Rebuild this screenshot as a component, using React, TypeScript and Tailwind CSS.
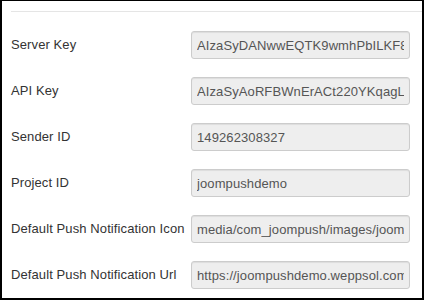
import React from "react";

const rows: [string, string][] = [
  ["Server Key", "AIzaSyDANwwEQTK9wmhPbILKF8xQ"],
  ["API Key", "AIzaSyAoRFBWnErACt220YKqagLmn"],
  ["Sender ID", "149262308327"],
  ["Project ID", "joompushdemo"],
  ["Default Push Notification Icon", "media/com_joompush/images/joompush.png"],
  ["Default Push Notification Url", "https://joompushdemo.weppsol.com"],
];

export default function App() {
  return (
    <div
      className="w-[424px] h-[300px] bg-white border-l-2 border-t border-r-2 border-b-2 border-black overflow-hidden"
      style={{ fontFamily: '"Liberation Sans", Arial, sans-serif' }}
    >
      <div className="pl-[9px] pt-[10px]">
        <div className="h-px bg-[#e5e5e5]" />
        <div className="mt-[19px] flex flex-col gap-[18px]">
          {rows.map(([label, value]) => (
            <div key={label} className="flex items-center h-[28px]">
              <div className="w-[180px] shrink-0 text-[13px] leading-[18px] tracking-[0.1px] text-[#333]">
                {label}
              </div>
              <input
                readOnly
                value={value}
                className="w-[219px] h-[28px] px-[5px] py-[4px] bg-[#eeeeee] border border-[#cccccc] rounded-[3px] text-[13px] leading-[18px] tracking-[0.1px] text-[#555] shadow-[inset_0_1px_1px_rgba(0,0,0,0.075)] outline-none"
                style={{ fontFamily: '"Liberation Sans", Arial, sans-serif' }}
              />
            </div>
          ))}
        </div>
      </div>
    </div>
  );
}
